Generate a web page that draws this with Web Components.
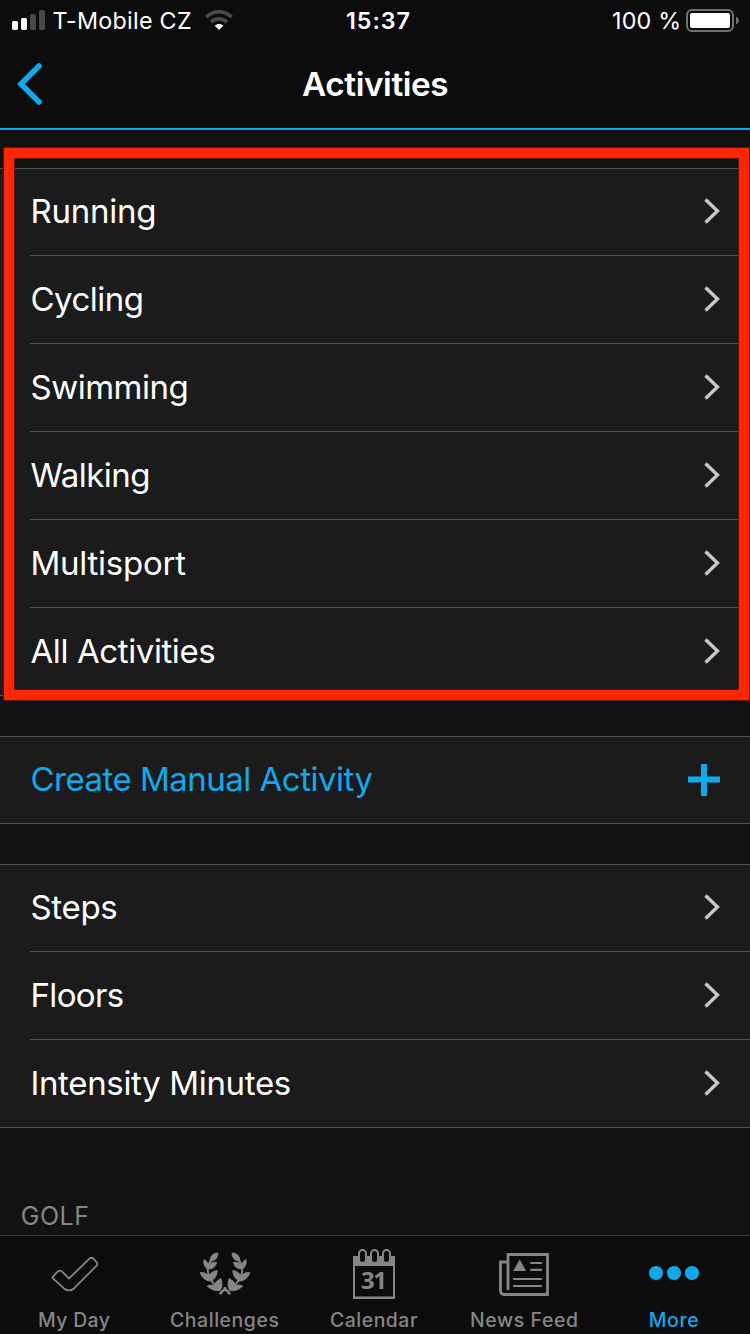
<!DOCTYPE html>
<html lang="en">
<head>
<meta charset="utf-8">
<title>Activities</title>
<style>
html,body{margin:0;padding:0;background:#121212}
body{width:750px;height:1334px;overflow:hidden;font-family:Inter,"Liberation Sans",sans-serif;color:#fff}
</style>
</head>
<body>
<app-screen></app-screen>
<script>
const define = (name, html, setup) => {
  const template = document.createElement('template');
  template.innerHTML = html;
  customElements.define(name, class extends HTMLElement {
    constructor() {
      super();
      this.attachShadow({ mode: 'open' }).append(template.content.cloneNode(true));
    }
    connectedCallback() { if (setup) setup(this, this.shadowRoot); }
  });
};

/* A single line of text tracked so its glyphs span `span` pixels. */
define('tracked-text', `
<style>
:host{display:block;flex:none;white-space:nowrap}
span{display:block;width:max-content}
</style>
<span><slot></slot></span>`, (el, root) => {
  const text = el.textContent;
  if (!text) return;
  const s = root.querySelector('span');
  s.style.letterSpacing = '0';
  const advance = s.getBoundingClientRect().width;
  const cs = getComputedStyle(el);
  const ctx = document.createElement('canvas').getContext('2d');
  ctx.font = `${cs.fontWeight} ${parseFloat(cs.fontSize) * 10}px ${cs.fontFamily}`;
  const m = ctx.measureText(text);
  const left = -m.actualBoundingBoxLeft / 10;
  const right = (m.width - m.actualBoundingBoxRight) / 10;
  const want = Number(el.getAttribute('span'));
  el.style.width = want + 'px';
  s.style.letterSpacing = ((want - (advance - left - right)) / (text.length - 1)).toFixed(3) + 'px';
  s.style.marginLeft = (-left).toFixed(2) + 'px';
});

define('status-bar', `
<style>
:host{display:flex;height:40px;box-sizing:border-box;padding:0 11px 0 12px;align-items:center;font-size:23.3px;line-height:40px}
.side{flex:1;display:flex;align-items:center}
.right{justify-content:flex-end}
.time{font-weight:600;padding-left:5px}
tracked-text{padding-top:2px;line-height:40px}
svg{display:block;flex:none}
</style>
<div class="side">
<svg width="33" height="20" viewBox="0 0 33 20"><g fill="#fff"><rect y="11" width="6" height="9" rx="1.7"/><rect x="9" y="8" width="6" height="12" rx="1.7"/></g><g fill="#484848"><rect x="18" y="4" width="6" height="16" rx="1.7"/><rect x="27" width="6" height="20" rx="1.7"/></g></svg>
<tracked-text span="136.7" style="margin-left:8.5px">T-Mobile CZ</tracked-text>
<svg width="28" height="20" viewBox="0 0 28 20" style="margin-left:14.8px"><g fill="none" stroke="#484848" stroke-width="3.6"><path d="M1.2 7.1C8.4 .1 19.6 .1 26.8 7.1"/><path d="M6 12.1C10.5 7.8 17.5 7.8 22 12.1"/></g><path fill="#fff" d="M9.7 15.7C12.2 13.4 15.8 13.4 18.3 15.7L14 20Z"/></svg>
</div>
<tracked-text class="time" span="61.8">15:37</tracked-text>
<div class="side right">
<tracked-text span="65.7">100 %</tracked-text>
<svg width="54" height="24" viewBox="0 0 54 24" style="margin:2px -1px 0 7.4px"><rect x="1" y="1" width="46" height="21" rx="5" fill="none" stroke="#717171" stroke-width="2"/><rect x="4" y="4" width="40" height="15" rx="2" fill="#fff"/><path d="M50 7.5Q53 9 53 11.5T50 15.5Z" fill="#717171"/></svg>
</div>`);

define('nav-header', `
<style>
:host{display:grid;grid-template-columns:1fr auto 1fr;align-items:center;height:88px;font-size:33.3px;font-weight:600;line-height:88px}
svg{display:block;margin-left:17px}
</style>
<svg width="26" height="44" viewBox="0 0 26 44"><path d="M22 4 4 22 22 40" fill="none" stroke="#11a9ed" stroke-width="5.6" stroke-linecap="round"/></svg>
<tracked-text span="145"></tracked-text>
<span></span>`, (el, root) => {
  const t = root.querySelector('tracked-text');
  t.textContent = el.textContent;
  t.connectedCallback();
});

define('list-group', `
<style>
:host{display:flex;flex-direction:column;background:#1b1b1b;border-top:1px solid #545454;border-bottom:1px solid #545454;position:relative}
</style>
<slot></slot>`);

define('list-row', `
<style>
:host{display:block;padding-left:30px}
.row{display:flex;align-items:center;justify-content:space-between;box-sizing:border-box;height:88px;padding:0 30px 0 1px;border-top:1px solid #545454;font-size:33px;line-height:87px}
:host([first]) .row{border-top:0;height:86px;line-height:84px;padding-bottom:2px}
:host([accent]) .row{color:#11a9ed}
svg{display:none}
.chev{display:block;margin-bottom:1px}
:host([first]) .chev{margin-bottom:0}
:host([accent]) .chev{display:none}
:host([accent]) .plus{display:block;margin-top:2px}
</style>
<div class="row"><slot></slot>
<svg class="chev" width="16" height="26" viewBox="0 0 16 26"><path d="M1.5 1.5 13.5 13 1.5 24.5" fill="none" stroke="#c7c7cc" stroke-width="3.4"/></svg>
<svg class="plus" width="32" height="32" viewBox="0 0 32 32"><path d="M16 0V32M0 15.5H32" fill="none" stroke="#11a9ed" stroke-width="6"/></svg>
</div>`);

/* Rectangular marker drawn over the list it annotates. */
define('highlight-frame', `
<style>
:host{position:absolute;left:4px;top:-21px;width:745px;height:552px;box-sizing:border-box;border:10px solid #ff2600;box-shadow:0 0 0 1px #541609,inset 0 0 0 1px #641408;pointer-events:none}
</style>`);

define('tab-item', `
<style>
:host{flex:0 0 150px;display:flex;flex-direction:column;align-items:center;color:#868686;font-size:19.4px;font-weight:500;line-height:24px}
:host([active]){color:#11a9ed}
.icon{height:72px;display:flex;align-items:center}
</style>
<div class="icon"><slot name="icon"></slot></div><slot></slot>`);

define('tab-bar', `
<style>
:host{display:flex;height:98px;background:#0c0c0c;border-top:1px solid #353535}
tab-item:first-of-type{margin-left:-1px}
svg{display:block}
text{font:700 24px "Noto Sans",sans-serif}
</style>
<tab-item><svg slot="icon" width="52" height="72" viewBox="0 0 52 72" style="margin-left:2px"><path d="M4.1 35.6 9.1 30.2Q11.3 28.3 13.5 30.2L20.5 37.2 41 16.9Q43 15.2 45 16.9L48.2 20.6Q49.5 22.5 48 24.3L25.5 47.4Q20.5 51.5 15.5 47.4L5 37.6Q3.6 36.6 4.1 35.6Z" transform="translate(-.5 6) scale(1 .98)" fill="none" stroke="currentColor" stroke-width="1.8"/></svg><tracked-text span="70" style="margin-left:1px">My Day</tracked-text></tab-item>
<tab-item><svg slot="icon" width="50" height="72" viewBox="0 0 50 72" style="margin-left:2px"><defs><g id="branch"><path d="M18 17Q10.5 17 10 25.3Q18 24.5 18 17ZM4.2 23.5Q2.5 29 7.5 33Q15 33.5 16.7 26.3Q11.5 25.5 8.5 29.5Q8.2 26 4.2 23.5ZM0 36.5Q3 44.5 10.5 45.2Q17 42 17.2 34.5Q11 35.5 9 40Q6 36 0 36.5ZM7.2 50Q12.5 55.5 20 54.5Q23.5 49.5 20.8 42.5Q15 45.5 14.3 49.8Q11.5 48.2 7.2 50Z" fill="currentColor" stroke="currentColor" stroke-width=".9"/><path d="M11.5 23.5Q6 31 8.5 38T16 51" fill="none" stroke="currentColor" stroke-width="1.9"/></g></defs><use href="#branch"/><use href="#branch" transform="translate(50 0) scale(-1 1)"/><path d="M20 58.3Q22 55 25 53Q28 55 30 58.3M25 51V55" fill="none" stroke="currentColor" stroke-width="2.6"/></svg><tracked-text span="107" style="margin-left:1px">Challenges</tracked-text></tab-item>
<tab-item><svg slot="icon" width="42" height="72" viewBox="0 0 42 72"><path fill="currentColor" fill-rule="evenodd" d="M0 20H42V63H0ZM2 30V60.5H40V30Z"/><g fill="#0c0c0c" stroke="#868686" stroke-width="2"><rect x="6" y="14" width="7" height="13" rx="3.5"/><rect x="18" y="14" width="7" height="13" rx="3.5"/><rect x="30" y="14" width="7" height="13" rx="3.5"/></g><text x="8" y="53.3" fill="currentColor" textLength="26">31</text></svg><tracked-text span="86">Calendar</tracked-text></tab-item>
<tab-item><svg slot="icon" width="50" height="72" viewBox="0 0 50 72"><path d="M9 54V18.5H48.5V58.5H5Q1.5 58.5 1.5 55V26H7.5" fill="none" stroke="currentColor" stroke-width="2.8"/><path fill="currentColor" d="M14 35 20.7 23.5 27.2 35Z"/><path d="M31.3 27H43M31.3 33.8H43M14 43H43M14 50H43" stroke="currentColor" stroke-width="2.2"/></svg><tracked-text span="105">News Feed</tracked-text></tab-item>
<tab-item active><svg slot="icon" width="50" height="72" viewBox="0 0 50 72"><g fill="currentColor"><circle cx="7" cy="37" r="7"/><circle cx="25" cy="37" r="7"/><circle cx="43" cy="37" r="7"/></g></svg><tracked-text span="47.5">More</tracked-text></tab-item>`);

define('app-screen', `
<style>
:host{display:flex;flex-direction:column;width:750px;height:1334px;overflow:hidden}
header{flex:none;background:#0c0c0c;border-bottom:2px solid #11a9ed}
main{flex:1;display:flex;flex-direction:column;gap:40px;padding-top:38px;min-height:0}
.section{color:#868686;font-size:25px;line-height:30px;margin:33px 0 0 22.2px}
.stem{margin-left:2px}
.round{margin-left:1px}
</style>
<header><status-bar></status-bar><nav-header>Activities</nav-header></header>
<main>
<list-group>
<list-row first><tracked-text class="stem" span="121.2">Running</tracked-text></list-row>
<list-row><tracked-text class="round" span="109.8">Cycling</tracked-text></list-row>
<list-row><tracked-text class="round" span="154.6">Swimming</tracked-text></list-row>
<list-row><tracked-text span="117.3">Walking</tracked-text></list-row>
<list-row><tracked-text class="stem" span="152.5">Multisport</tracked-text></list-row>
<list-row><tracked-text span="183.3">All Activities</tracked-text></list-row>
<highlight-frame></highlight-frame>
</list-group>
<list-group>
<list-row first accent><tracked-text class="round" span="340.5">Create Manual Activity</tracked-text></list-row>
</list-group>
<list-group>
<list-row first><tracked-text class="round" span="84.3">Steps</tracked-text></list-row>
<list-row><tracked-text class="stem" span="89.8">Floors</tracked-text></list-row>
<list-row><tracked-text class="stem" span="256.8">Intensity Minutes</tracked-text></list-row>
</list-group>
<tracked-text class="section" span="65.2">GOLF</tracked-text>
</main>
<tab-bar></tab-bar>`);
</script>
</body>
</html>
